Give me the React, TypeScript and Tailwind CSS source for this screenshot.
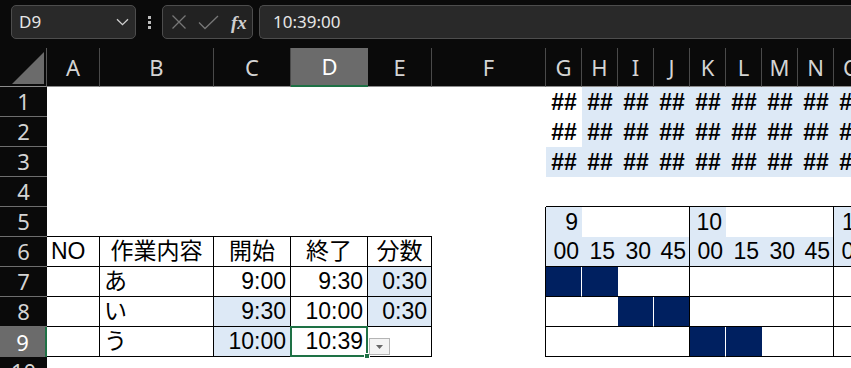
import React from "react";

const COLS = ["A", "B", "C", "D", "E", "F", "G", "H", "I", "J", "K", "L", "M", "N", "O"];
const GANTT = ["G", "H", "I", "J", "K", "L", "M", "N", "O"];
const ROWS = [1, 2, 3, 4, 5, 6, 7, 8, 9, 10];

const BLUE = "bg-[#dde9f6]";
const NAVY = "bg-[#002060]";

interface CellSpec {
  text?: string;
  cls: string;
  selected?: boolean;
}

// fixed values typed into the sheet
const texts: { [key: string]: string } = {
  A6: "NO",
  B6: "作業内容",
  C6: "開始",
  D6: "終了",
  E6: "分数",
  B7: "あ",
  C7: "9:00",
  D7: "9:30",
  E7: "0:30",
  B8: "い",
  C8: "9:30",
  D8: "10:00",
  E8: "0:30",
  B9: "う",
  C9: "10:00",
  D9: "10:39",
  G5: "9",
  K5: "10",
  O5: "11",
};

const blueCells = ["C8", "C9", "E7", "E8", "G5", "K5", "O5"];
const navyCells = ["G7", "H7", "I8", "J8", "K9", "L9"];

function spec(col: string, row: number): CellSpec {
  const key = col + row;
  const c: string[] = [];
  const g = GANTT.includes(col);
  const tbl = "ABCDE".includes(col);
  let text = texts[key];
  let bg = "bg-white";

  if (tbl && row === 5) c.push("border-b border-b-black");
  if (tbl && row >= 6 && row <= 9) c.push("border-b border-b-black border-r border-r-black");
  if (col === "F" && row >= 5 && row <= 9) c.push("border-r border-r-black");
  if (g && row === 4) c.push("border-b border-b-black");
  if (g && row >= 6 && row <= 9) c.push("border-b border-b-black");
  if ((col === "J" || col === "N") && row >= 5 && row <= 9) c.push("border-r border-r-black");
  if (["G7", "I8", "K9"].includes(key)) c.push("border-r border-r-white");

  if (g && row <= 3) {
    text = "##";
    c.push("justify-center font-bold");
    if (!(col === "G" && row < 3)) bg = BLUE;
  } else if (g && row === 6) {
    text = ["00", "15", "30", "45"][GANTT.indexOf(col) % 4];
    bg = BLUE;
    c.push("justify-end pr-[3px]");
  } else if (row === 6 && tbl) {
    c.push(col === "A" ? "justify-start pl-[4px]" : "justify-center");
  } else if (col === "B") {
    c.push("justify-start pl-[4px]");
  } else {
    c.push("justify-end pr-[4px]");
  }

  if (blueCells.includes(key)) bg = BLUE;
  if (navyCells.includes(key)) bg = NAVY;
  c.push(bg);

  return { text, cls: c.join(" "), selected: key === "D9" };
}

const Chevron = () => (
  <svg width="13" height="8" viewBox="0 0 13 8" fill="none" stroke="#cfcfcf" strokeWidth="1.3">
    <path d="M1 1.2 L6.5 6.6 L12 1.2" />
  </svg>
);

const FormulaBar = () => (
  <div className="h-[48px] flex items-start pt-[5px] font-['Noto_Sans',sans-serif]">
    <div className="ml-[11px] w-[125px] h-[34px] rounded-[5px] border border-[#4d4d4d] bg-[#292929] flex items-center justify-between pl-[7px] pr-[6px]">
      <span className="text-[17px] text-[#e6e6e6]">D9</span>
      <Chevron />
    </div>
    <div className="w-[26px] h-[34px] flex flex-col items-center justify-center gap-[2px]">
      <span className="w-[3px] h-[3px] bg-[#bdbdbd]" />
      <span className="w-[3px] h-[3px] bg-[#bdbdbd]" />
      <span className="w-[3px] h-[3px] bg-[#bdbdbd]" />
    </div>
    <div className="w-[91px] h-[34px] rounded-[5px] border border-[#4d4d4d] bg-[#222222] flex items-center pl-[8px]">
      <svg width="16" height="16" viewBox="0 0 16 16" stroke="#777777" strokeWidth="1.3" fill="none">
        <path d="M1.5 1.5 L14.5 14.5 M14.5 1.5 L1.5 14.5" />
      </svg>
      <svg className="ml-[11px]" width="21" height="15" viewBox="0 0 21 15" stroke="#777777" strokeWidth="1.3" fill="none">
        <path d="M1 7.5 L7 13.5 L20 1" />
      </svg>
      <span className="ml-[12px] text-[19px] italic font-bold text-[#cfcfcf] font-['Liberation_Serif',serif] leading-none">fx</span>
    </div>
    <div className="ml-[6px] flex-1 h-[34px] rounded-l-[5px] border border-r-0 border-[#4d4d4d] bg-[#292929] flex items-center pl-[13px]">
      <span className="text-[17px] text-[#e6e6e6]">10:39:00</span>
    </div>
  </div>
);

export default function App() {
  return (
    <div className="w-[851px] h-[368px] overflow-hidden bg-[#0a0a0a]">
      <FormulaBar />
      <div className="grid grid-cols-[47px_53px_114px_77px_77px_64px_114px_repeat(9,36px)] w-[870px]">
        {/* header row */}
        <div className="h-[39px] relative border-b border-b-[#8c8c8c] border-r border-r-[#5a5a5a]">
          <svg className="absolute left-[12px] top-[4px]" width="32" height="32" viewBox="0 0 32 32">
            <polygon points="0,32 32,32 32,0" fill="#6b6b6b" />
          </svg>
        </div>
        {COLS.map((col) => (
          <div
            key={col}
            className={
              col === "D"
                ? "h-[39px] flex items-center justify-center bg-[#6b6b6b] text-white text-[22px] font-['Noto_Sans',sans-serif] border-b-2 border-b-[#1e7145]"
                : "h-[39px] flex items-center justify-center text-[#d4d4d4] text-[22px] font-['Noto_Sans',sans-serif] border-b border-b-[#8c8c8c] border-r border-r-[#4a4a4a]"
            }
          >
            {col}
          </div>
        ))}

        {ROWS.map((row) => (
          <React.Fragment key={row}>
            <div
              className={
                row === 9
                  ? "h-[30px] flex items-center justify-center bg-[#6b6b6b] text-white text-[22px] font-['Noto_Sans',sans-serif] border-r-2 border-r-[#1e7145]"
                  : "h-[30px] flex items-center justify-center text-[#d4d4d4] text-[22px] font-['Noto_Sans',sans-serif] border-b border-b-[#6e6e6e]"
              }
            >
              {row}
            </div>
            {COLS.map((col) => {
              const s = spec(col, row);
              return (
                <div
                  key={col}
                  className={
                    "relative h-[30px] flex items-center text-black text-[23px] whitespace-nowrap font-['Liberation_Sans','Noto_Sans_CJK_JP',sans-serif] " +
                    s.cls
                  }
                >
                  {s.text}
                  {s.selected && (
                    <>
                      <div className="absolute z-10 -left-px -top-px -right-px -bottom-px border-2 border-[#1e7145] pointer-events-none">
                        <span className="absolute -right-[4px] -bottom-[4px] w-[6px] h-[6px] bg-[#1e7145] border border-white" />
                      </div>
                      {/* autocomplete dropdown button */}
                      <div className="absolute z-10 left-[78px] top-[11px] w-[21px] h-[17px] bg-[#f3f3f3] border border-[#b4b4b4] flex items-center justify-center">
                        <svg width="7" height="4" viewBox="0 0 7 4">
                          <polygon points="0,0 7,0 3.5,4" fill="#666666" />
                        </svg>
                      </div>
                    </>
                  )}
                </div>
              );
            })}
          </React.Fragment>
        ))}
      </div>
    </div>
  );
}
